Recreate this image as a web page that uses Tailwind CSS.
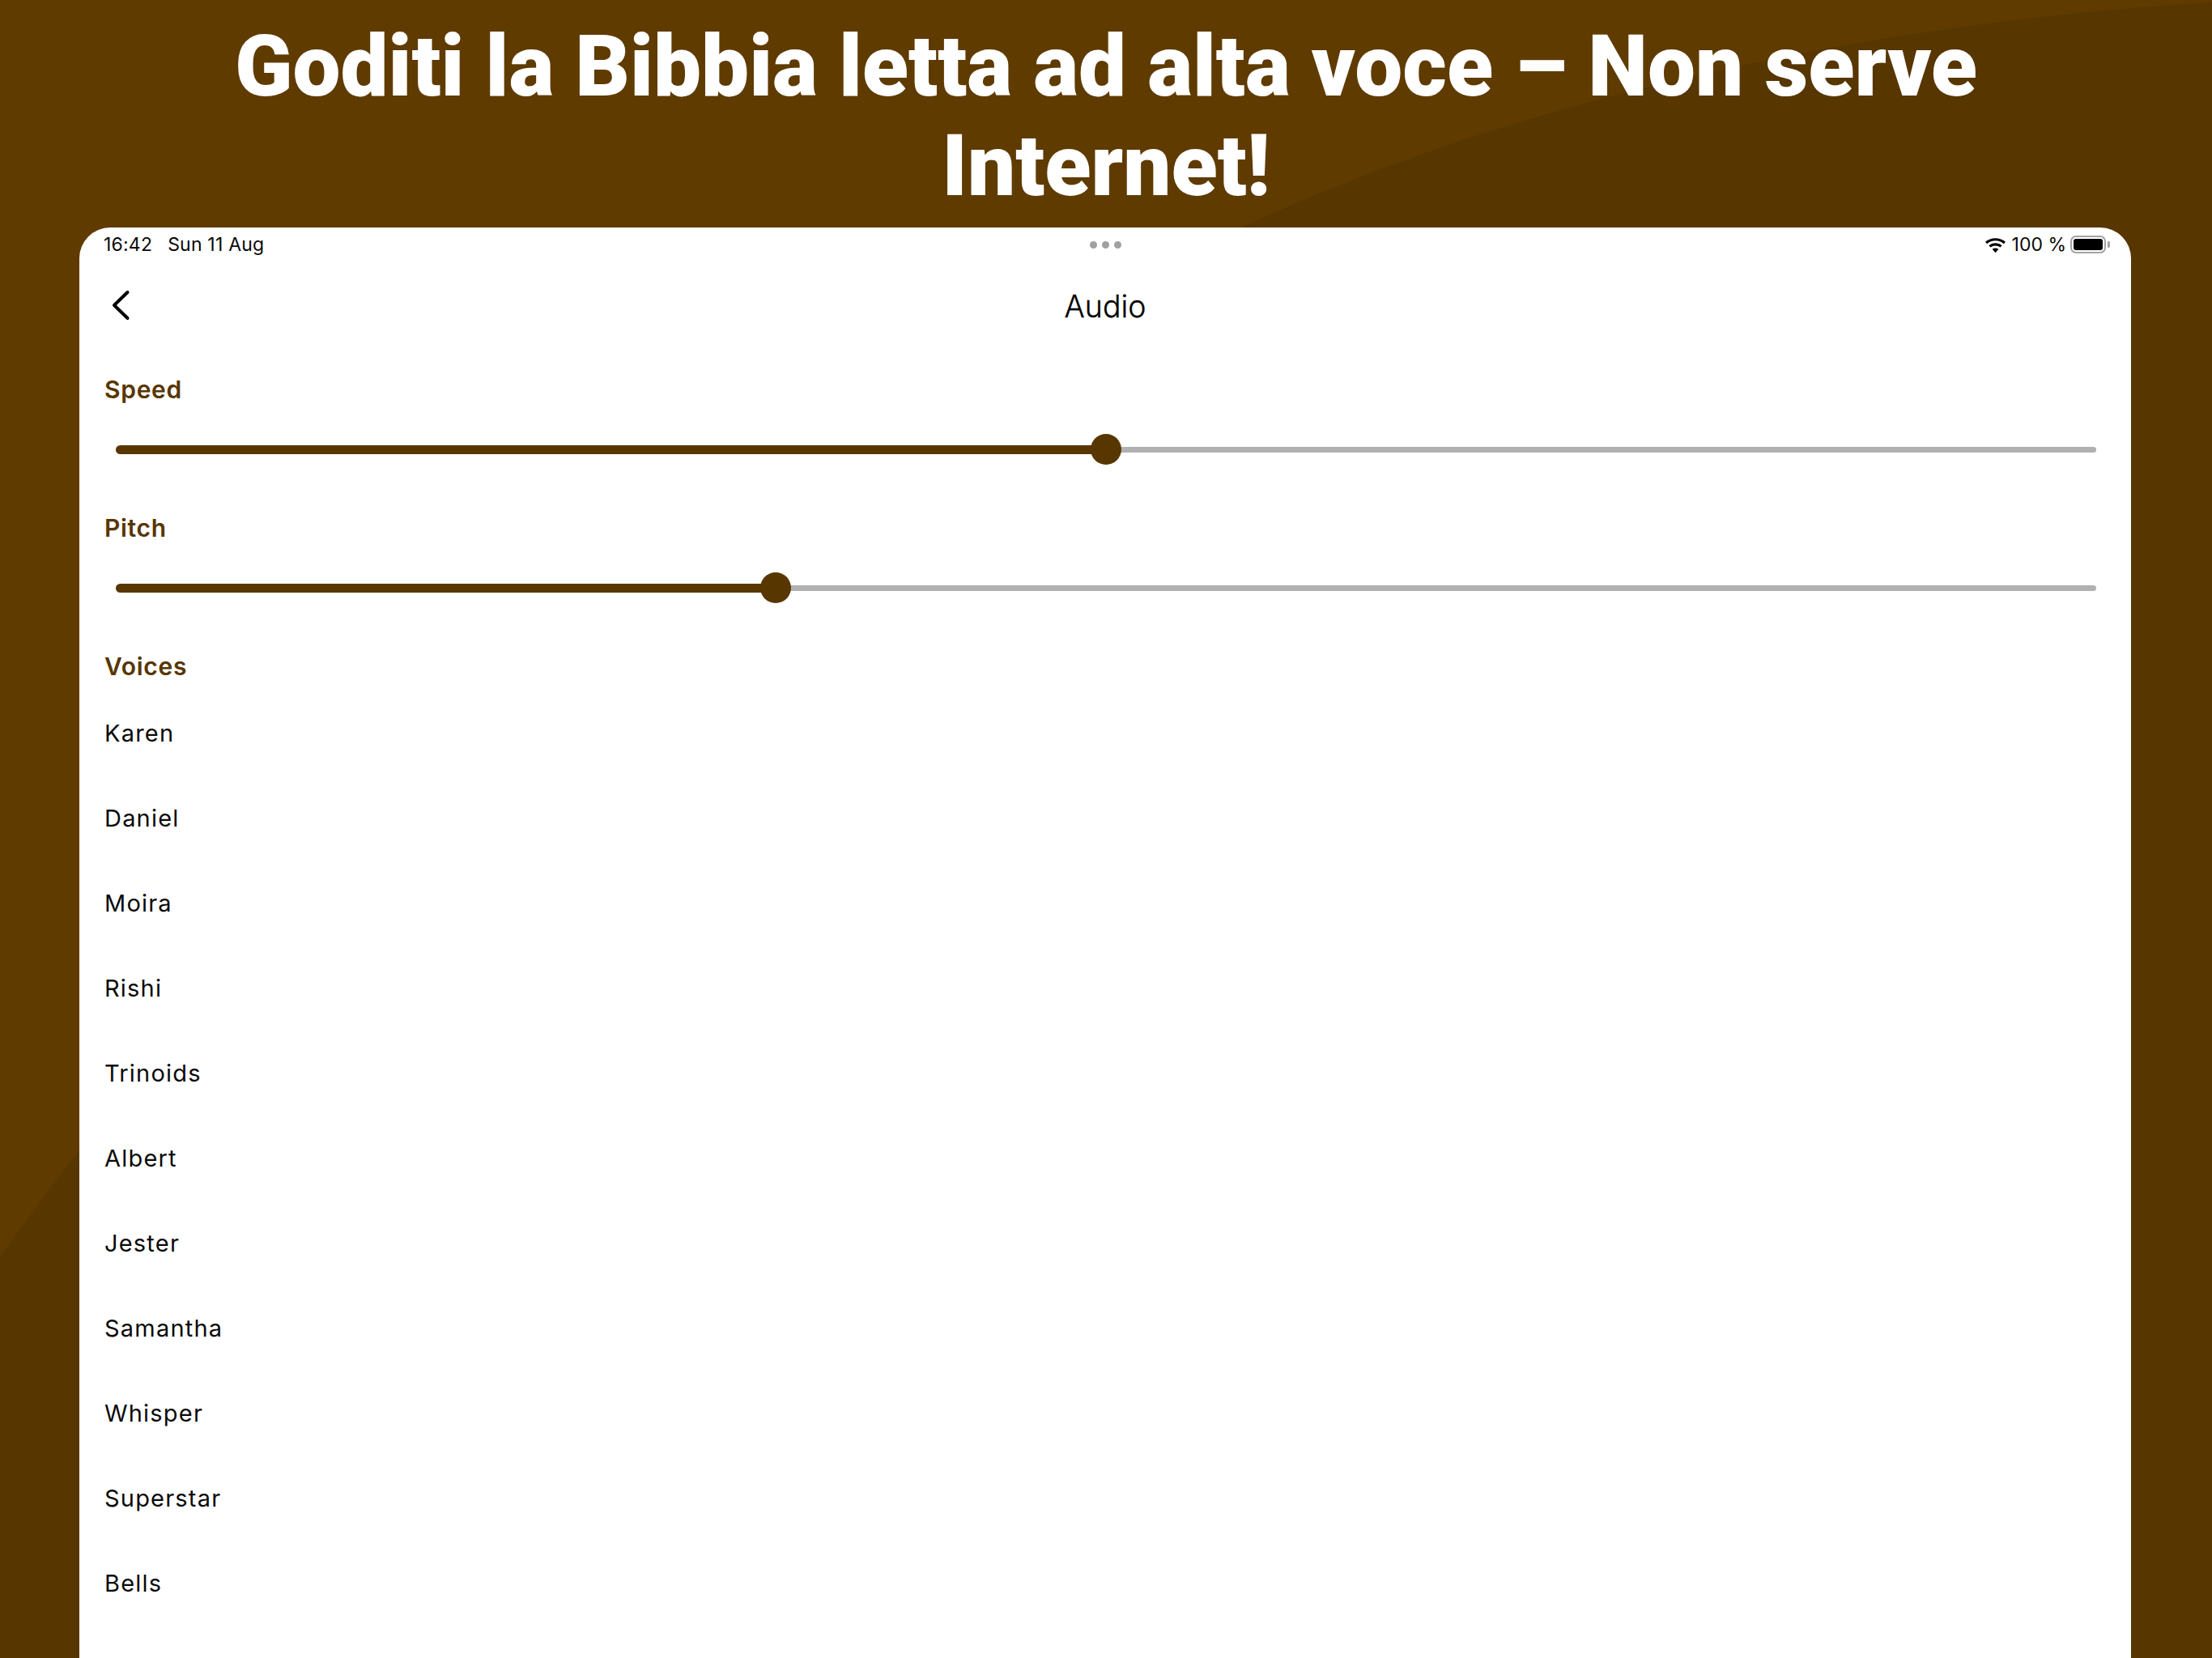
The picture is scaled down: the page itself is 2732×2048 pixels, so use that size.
<!DOCTYPE html>
<html lang="it">
<head>
<meta charset="utf-8">
<script src="https://cdn.jsdelivr.net/npm/@tailwindcss/browser@4"></script>
<title>Audio</title>
</head>
<body class="m-0">
<div class="relative w-[2732px] h-[2048px] overflow-hidden bg-[#5f3b00] font-['Inter',sans-serif]">
  <svg class="absolute inset-0" width="2732" height="2048" viewBox="0 0 2732 2048"><path d="M0 1553 C 420 960 1000 560 1536 280 C 1900 110 2350 25 2732 3 V2048 H0 Z" fill="#573600"/></svg>
  <div class="relative flex flex-col h-full">
    <h1 class="h-[281px] shrink-0 pt-[21px] px-[200px] text-center text-white font-['Roboto',sans-serif] font-black text-[105px] leading-[123px]">Goditi la Bibbia letta ad alta voce – Non serve Internet!</h1>
    <main class="ml-[98px] mr-[100px] flex-1 bg-white rounded-t-[38px] text-[#0a0a0a]">
      <div class="relative h-[42px] px-[30px] flex items-center justify-between text-[23px]">
        <div class="flex gap-[19px] tracking-[0.2px]"><span>16:42</span><span>Sun 11 Aug</span></div>
        <div class="absolute left-[1248px] top-[17px] flex gap-[6px]">
          <span class="w-[9px] h-[9px] rounded-full bg-[#a0a0a0]"></span><span class="w-[9px] h-[9px] rounded-full bg-[#a0a0a0]"></span><span class="w-[9px] h-[9px] rounded-full bg-[#a0a0a0]"></span>
        </div>
        <div class="flex items-center mr-[-4px]">
          <svg class="mr-[7px] -ml-[2px]" width="27" height="21" viewBox="0 0 26 20"><path d="M1 6.5 C 7.5 .6 18.5 .6 25 6.5 L23 8.8 C 17.5 3.8 8.5 3.8 3 8.8Z M5.2 10.8 C 9.5 7 16.5 7 20.8 10.8 L18.8 13 C 15.5 10.2 10.5 10.2 7.2 13Z M9.3 15 C 11.5 13.4 14.5 13.4 16.7 15 L13 19.4Z" fill="#000"/></svg>
          <span class="mr-[5px]">100 %</span>
          <div class="flex items-center gap-[2px]">
            <div class="w-[44px] h-[22px] rounded-[7px] border-[2px] border-[#a3a3a3] p-[2px]"><div class="w-full h-full rounded-[3px] bg-black"></div></div>
            <div class="w-[3px] h-[8px] rounded-r-[2px] bg-[#a3a3a3]"></div>
          </div>
        </div>
      </div>
      <header class="relative h-[76px] mt-[18px] flex items-center justify-center">
        <svg class="absolute left-[38px] top-[16px]" width="26" height="40" viewBox="0 0 26 40"><path d="M21.5 4 L5 20 L21.5 36" fill="none" stroke="#000" stroke-width="4" stroke-linecap="round" stroke-linejoin="round"/></svg>
        <span class="text-[37.5px] font-light text-black [-webkit-text-stroke:0.3px_black]">Audio</span>
      </header>
      <section class="px-[31px] pt-[43px]">
        <h2 class="h-[42px] leading-[42px] text-[30px] font-semibold tracking-[0.7px] text-[#573600]">Speed</h2>
        <div class="h-[76px] mt-[15px] ml-[14px] mr-[12px] flex items-center">
          <div class="h-[11px] w-[1206px] rounded-l-full bg-[#573600]"></div>
          <div class="w-[38px] h-[38px] shrink-0 rounded-full bg-[#573600] -mx-[2px] relative"></div>
          <div class="h-[7px] flex-1 rounded-r-full bg-[#b0b0b0]"></div>
        </div>
      </section>
      <section class="px-[31px] pt-[38px]">
        <h2 class="h-[42px] leading-[42px] text-[30px] font-semibold tracking-[0.7px] text-[#573600]">Pitch</h2>
        <div class="h-[76px] mt-[15px] ml-[14px] mr-[12px] flex items-center">
          <div class="h-[11px] w-[798px] rounded-l-full bg-[#573600]"></div>
          <div class="w-[38px] h-[38px] shrink-0 rounded-full bg-[#573600] -mx-[2px] relative"></div>
          <div class="h-[7px] flex-1 rounded-r-full bg-[#b0b0b0]"></div>
        </div>
      </section>
      <section class="px-[31px] pt-[38px]">
        <h2 class="h-[42px] leading-[42px] text-[30px] font-semibold tracking-[0.7px] text-[#573600]">Voices</h2>
        <ul class="text-[29px] tracking-[1.2px] mt-[9px]">
          <li class="h-[105px] flex items-center">Karen</li>
          <li class="h-[105px] flex items-center">Daniel</li>
          <li class="h-[105px] flex items-center">Moira</li>
          <li class="h-[105px] flex items-center">Rishi</li>
          <li class="h-[105px] flex items-center">Trinoids</li>
          <li class="h-[105px] flex items-center">Albert</li>
          <li class="h-[105px] flex items-center">Jester</li>
          <li class="h-[105px] flex items-center">Samantha</li>
          <li class="h-[105px] flex items-center">Whisper</li>
          <li class="h-[105px] flex items-center">Superstar</li>
          <li class="h-[105px] flex items-center">Bells</li>
        </ul>
      </section>
    </main>
  </div>
</div>
</body>
</html>
